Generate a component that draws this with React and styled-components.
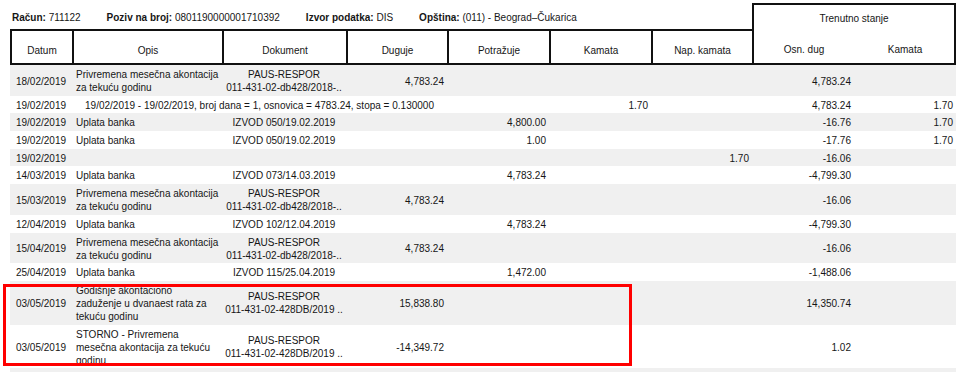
import React from "react";
import styled, { createGlobalStyle } from "styled-components";

const COLS = "62px 150px 124px 101px 102px 102px 101px 102px 102px";

const GlobalStyle = createGlobalStyle`
  html, body {
    margin: 0;
    padding: 0;
    overflow: hidden;
    background: #ffffff;
  }
  body {
    font-family: "Liberation Sans", Arial, sans-serif;
    font-size: 10px;
    color: #161616;
  }
`;

const Page = styled.div`
  position: relative;
  padding: 3px 0 0 10px;
  width: 946px;
`;

const HeaderGrid = styled.div`
  display: grid;
  grid-template-columns: ${COLS};
  grid-template-rows: 26px 36px;
`;

const InfoBar = styled.div`
  grid-column: 1 / 8;
  grid-row: 1;
  display: flex;
  align-items: center;
  gap: 26px;
  padding: 2px 0 0 2px;
  line-height: 13px;
  white-space: nowrap;
`;

const Label = styled.b`
  font-weight: 700;
`;

const HeadCell = styled.div`
  grid-row: 2;
  box-sizing: border-box;
  border-top: 2px solid #111;
  border-bottom: 2px solid #111;
  border-left: 2px solid #111;
  display: flex;
  align-items: flex-end;
  justify-content: center;
  padding-bottom: 6px;
  line-height: 13px;
  white-space: nowrap;
`;

const StateBox = styled.div`
  grid-column: 8 / 10;
  grid-row: 1 / 3;
  box-sizing: border-box;
  border: 2px solid #111;
  display: flex;
  flex-direction: column;
`;

const StateTitle = styled.div`
  height: 26px;
  display: flex;
  align-items: center;
  justify-content: center;
  line-height: 13px;
`;

const StateSubRow = styled.div`
  flex: 1;
  display: grid;
  grid-template-columns: 1fr 1fr;
  align-items: end;
  padding-bottom: 7px;
  line-height: 13px;
`;

const StateSub = styled.div`
  text-align: center;
  padding-left: ${(p) => p.$shift || 0}px;
`;

const Body = styled.div`
  display: flex;
  flex-direction: column;
`;

const Row = styled.div`
  display: grid;
  grid-template-columns: ${COLS};
  background: ${(p) => (p.$shade ? "#f0f0f0" : "#ffffff")};
  padding: 3px 0 1.7px;
  line-height: 13px;
  min-height: 13px;
`;

const Cell = styled.div`
  display: flex;
  flex-direction: column;
  justify-content: center;
  align-items: ${(p) =>
    p.$align === "left" ? "flex-start" : p.$align === "right" ? "flex-end" : "center"};
  text-align: ${(p) => p.$align || "center"};
  padding: ${(p) => (p.$align === "left" ? "0 2px 0 4px" : p.$align === "right" ? "0 3px 0 0" : "0")};
  grid-column: ${(p) => (p.$span ? `span ${p.$span}` : "auto")};
  white-space: nowrap;
`;

const Highlight = styled.div`
  position: absolute;
  left: 3px;
  top: 284px;
  width: 629px;
  height: 82px;
  box-sizing: border-box;
  border: 3px solid #ff0000;
  pointer-events: none;
`;

const PRIV = ["Privremena mesečna akontacija", "za tekuću godinu"];
const PAUS18 = ["PAUS-RESPOR", "011-431-02-db428/2018-.."];
const PAUS19 = ["PAUS-RESPOR", "011-431-02-428DB/2019 .."];

const rows = [
  { d: "18/02/2019", o: PRIV, k: PAUS18, dug: "4,783.24", osn: "4,783.24" },
  {
    d: "19/02/2019",
    span: "19/02/2019 - 19/02/2019, broj dana = 1, osnovica = 4783.24, stopa = 0.130000",
    kam: "1.70",
    osn: "4,783.24",
    tk: "1.70",
  },
  { d: "19/02/2019", o: ["Uplata banka"], k: ["IZVOD 050/19.02.2019"], pot: "4,800.00", osn: "-16.76", tk: "1.70" },
  { d: "19/02/2019", o: ["Uplata banka"], k: ["IZVOD 050/19.02.2019"], pot: "1.00", osn: "-17.76", tk: "1.70" },
  { d: "19/02/2019", nap: "1.70", osn: "-16.06" },
  { d: "14/03/2019", o: ["Uplata banka"], k: ["IZVOD 073/14.03.2019"], pot: "4,783.24", osn: "-4,799.30" },
  { d: "15/03/2019", o: PRIV, k: PAUS18, dug: "4,783.24", osn: "-16.06" },
  { d: "12/04/2019", o: ["Uplata banka"], k: ["IZVOD 102/12.04.2019"], pot: "4,783.24", osn: "-4,799.30" },
  { d: "15/04/2019", o: PRIV, k: PAUS18, dug: "4,783.24", osn: "-16.06" },
  { d: "25/04/2019", o: ["Uplata banka"], k: ["IZVOD 115/25.04.2019"], pot: "1,472.00", osn: "-1,488.06" },
  {
    d: "03/05/2019",
    o: ["Godišnje akontaciono", "zaduženje u dvanaest rata za", "tekuću godinu"],
    k: PAUS19,
    dug: "15,838.80",
    osn: "14,350.74",
  },
  {
    d: "03/05/2019",
    o: ["STORNO - Privremena", "mesečna akontacija za tekuću", "godinu"],
    k: PAUS19,
    dug: "-14,349.72",
    osn: "1.02",
  },
  { d: "" },
];

const Lines = ({ lines }) =>
  (lines || []).map((l, i) => <span key={i}>{l}</span>);

const headers = ["Datum", "Opis", "Dokument", "Duguje", "Potražuje", "Kamata", "Nap. kamata"];

export default function App() {
  return (
    <>
      <GlobalStyle />
      <Page>
        <HeaderGrid>
          <InfoBar>
            <span>
              <Label>Račun:</Label> 711122
            </span>
            <span>
              <Label>Poziv na broj:</Label> 0801190000001710392
            </span>
            <span>
              <Label>Izvor podatka:</Label> DIS
            </span>
            <span>
              <Label>Opština:</Label> (011) - Beograd–Čukarica
            </span>
          </InfoBar>
          {headers.map((h) => (
            <HeadCell key={h}>{h}</HeadCell>
          ))}
          <StateBox>
            <StateTitle>Trenutno stanje</StateTitle>
            <StateSubRow>
              <StateSub>Osn. dug</StateSub>
              <StateSub $shift={2}>Kamata</StateSub>
            </StateSubRow>
          </StateBox>
        </HeaderGrid>
        <Body>
          {rows.map((r, i) => (
            <Row key={i} $shade={i % 2 === 0}>
              <Cell>{r.d}</Cell>
              {r.span ? (
                <Cell $span={3}>{r.span}</Cell>
              ) : (
                <>
                  <Cell $align="left">
                    <Lines lines={r.o} />
                  </Cell>
                  <Cell>
                    <Lines lines={r.k} />
                  </Cell>
                  <Cell $align="right">{r.dug}</Cell>
                </>
              )}
              <Cell $align="right">{r.pot}</Cell>
              <Cell $align="right">{r.kam}</Cell>
              <Cell $align="right">{r.nap}</Cell>
              <Cell $align="right">{r.osn}</Cell>
              <Cell $align="right">{r.tk}</Cell>
            </Row>
          ))}
        </Body>
        <Highlight />
      </Page>
    </>
  );
}
